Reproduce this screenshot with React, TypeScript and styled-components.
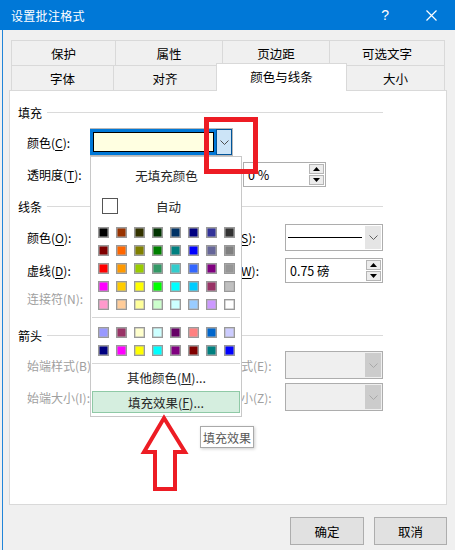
import React from 'react';
import styled, { createGlobalStyle } from 'styled-components';

const FONT = '"Noto Sans CJK SC", "Noto Sans", sans-serif';

const GlobalStyle = createGlobalStyle`
  html, body {
    margin: 0;
    padding: 0;
    background: #f0f0f0;
    font-family: ${FONT};
    font-size: 12px;
  }
  * {
    box-sizing: border-box;
  }
`;

const PALETTE = [
  ['#000000', '#993300', '#333300', '#003300', '#003366', '#000080', '#333399', '#333333'],
  ['#800000', '#ff6600', '#808000', '#008000', '#008080', '#0000ff', '#666699', '#808080'],
  ['#ff0000', '#ff9900', '#99cc00', '#339966', '#33cccc', '#3366ff', '#800080', '#969696'],
  ['#ff00ff', '#ffcc00', '#ffff00', '#00ff00', '#00ffff', '#00ccff', '#993366', '#c0c0c0'],
  ['#ff99cc', '#ffcc99', '#ffff99', '#ccffcc', '#ccffff', '#99ccff', '#cc99ff', '#ffffff'],
];

const RECENT = [
  ['#9999ff', '#993366', '#ffffcc', '#ccffff', '#660066', '#ff8080', '#0066cc', '#ccccff'],
  ['#000080', '#ff00ff', '#ffff00', '#00ffff', '#800080', '#800000', '#008080', '#0000ff'],
];

const Chevron = ({ color = '#606060' }: { color?: string }) => (
  <svg width='9' height='5' viewBox='0 0 9 5'>
    <polyline points='0.5,0.5 4.5,4.5 8.5,0.5' fill='none' stroke={color} strokeWidth='1' />
  </svg>
);

const Triangle = ({ down }: { down?: boolean }) => (
  <svg width='7' height='4' viewBox='0 0 7 4'>
    <polygon points={down ? '0,0 7,0 3.5,4' : '3.5,0 7,4 0,4'} fill='#000' />
  </svg>
);

const Spin = ({ value, width }: { value: string; width: number }) => (
  <SpinBox $w={width}>
    <SpinText>{value}</SpinText>
    <SpinButtons>
      <SpinBtn>
        <Triangle />
      </SpinBtn>
      <SpinBtn>
        <Triangle down />
      </SpinBtn>
    </SpinButtons>
  </SpinBox>
);

const App = () => {
  return (
    <>
      <GlobalStyle />
      <Window>
        <TitleBar>
          <Title>设置批注格式</Title>
          <TitleIcons>
            <Help>?</Help>
            <svg width='11' height='11' viewBox='0 0 11 11'>
              <path d='M0.5,0.5 L10.5,10.5 M10.5,0.5 L0.5,10.5' stroke='#fff' strokeWidth='1.2' />
            </svg>
          </TitleIcons>
        </TitleBar>

        <Frame>
          <Tabs>
            <TabRow>
              <Tab $w={104}>保护</Tab>
              <Tab $w={107}>属性</Tab>
              <Tab $w={107}>页边距</Tab>
              <Tab $w={116} $last>可选文字</Tab>
            </TabRow>
            <TabRow>
              <Tab $w={102}>字体</Tab>
              <Tab $w={103}>对齐</Tab>
              <ActiveTab $w={131}>颜色与线条</ActiveTab>
              <Tab $w={98} $last>大小</Tab>
            </TabRow>
          </Tabs>

          <Panel>
            <Section $mt={0}>
              <span>填充</span>
              <Rule />
            </Section>
            <Row $mt={7}>
              <Label>
                颜色(<u>C</u>):
              </Label>
              <ColorCombo>
                <FocusRing>
                  <ColorFill />
                </FocusRing>
                <ActiveDrop>
                  <Chevron color='#4d4d4d' />
                </ActiveDrop>
              </ColorCombo>
            </Row>
            <Row $mt={4}>
              <Label>
                透明度(<u>T</u>):
              </Label>
              <Slot $w={153} />
              <Spin value='0 %' width={83} />
            </Row>

            <Section $mt={9}>
              <span>线条</span>
              <Rule />
            </Section>
            <Row $mt={8}>
              <Label>
                颜色(<u>O</u>):
              </Label>
              <Slot $w={123} />
              <Label $w={72}>
                样式(<u>S</u>):
              </Label>
              <LineCombo>
                <LineSample>
                  <Stroke />
                </LineSample>
                <GrayDrop>
                  <Chevron />
                </GrayDrop>
              </LineCombo>
            </Row>
            <Row $mt={5}>
              <Label>
                虚线(<u>D</u>):
              </Label>
              <Slot $w={123} />
              <Label $w={72}>
                粗细(<u>W</u>):
              </Label>
              <Spin value='0.75 磅' width={98} />
            </Row>
            <Row $mt={0}>
              <Label $disabled>连接符(N):</Label>
            </Row>

            <Section $mt={14}>
              <span>箭头</span>
              <Rule />
            </Section>
            <Row $mt={7}>
              <Label $disabled>始端样式(B):</Label>
              <Slot $w={115} />
              <Label $w={80} $disabled>
                末端样式(E):
              </Label>
              <DisabledCombo>
                <GrayDrop $disabled>
                  <Chevron color='#a8a8a8' />
                </GrayDrop>
              </DisabledCombo>
            </Row>
            <Row $mt={4}>
              <Label $disabled>始端大小(I):</Label>
              <Slot $w={115} />
              <Label $w={80} $disabled>
                末端大小(Z):
              </Label>
              <DisabledCombo>
                <GrayDrop $disabled>
                  <Chevron color='#a8a8a8' />
                </GrayDrop>
              </DisabledCombo>
            </Row>
          </Panel>

          <Footer>
            <Button $w={74}>确定</Button>
            <Button $w={73}>取消</Button>
          </Footer>
        </Frame>

        <Popup>
          <MenuItem $h={30}>无填充颜色</MenuItem>
          <AutoRow>
            <Check />
            <span>自动</span>
          </AutoRow>
          <Grid $mt={5}>
            {PALETTE.flat().map((c, i) => (
              <Swatch key={i} $c={c} />
            ))}
          </Grid>
          <MenuRule />
          <Grid $mt={9}>
            {RECENT.flat().map((c, i) => (
              <Swatch key={i} $c={c} />
            ))}
          </Grid>
          <MenuRule />
          <MoreItem>
            其他颜色(<u>M</u>)...
          </MoreItem>
          <HotItem>
            填充效果(<u>F</u>)...
          </HotItem>
        </Popup>

        <Tooltip>填充效果</Tooltip>

        <RedBox />
        <Arrow width='56' height='88' viewBox='0 0 56 88'>
          <polygon
            points='26,8 47,42 37,42 37,79 17,79 17,42 6,42'
            fill='none'
            stroke='#ed1c24'
            strokeWidth='4'
            strokeLinejoin='miter'
          />
        </Arrow>
      </Window>
    </>
  );
};

export default App;

// styled
const Window = styled.div`
  position: relative;
  width: 455px;
  height: 550px;
  overflow: hidden;
  background: #f0f0f0;
`;

const TitleBar = styled.div`
  height: 30px;
  background: #0078d7;
  color: #fff;
  display: flex;
  align-items: center;
  justify-content: space-between;
  padding: 0 18px 0 11px;
`;

const Title = styled.div`
  font-size: 12px;
  letter-spacing: 0.3px;
`;

const TitleIcons = styled.div`
  display: flex;
  align-items: center;
  gap: 37px;
`;

const Help = styled.span`
  font-family: 'Liberation Sans', sans-serif;
  font-size: 14px;
`;

const Frame = styled.div`
  margin-left: 2px;
  border-left: 1px solid #2185d9;
  height: 520px;
  padding-top: 10px;
`;

const Tabs = styled.div`
  margin-left: 8px;
  width: 434px;
`;

const TabRow = styled.div`
  display: flex;
  align-items: flex-end;
  height: 25px;
`;

const Tab = styled.div<{ $w: number; $last?: boolean }>`
  width: ${(p) => p.$w}px;
  height: 25px;
  border-top: 1px solid #d9d9d9;
  border-left: 1px solid #d9d9d9;
  border-right: ${(p) => (p.$last ? '1px solid #d9d9d9' : 'none')};
  display: flex;
  align-items: center;
  justify-content: center;
  color: #000;
  font-size: 12.5px;
`;

const ActiveTab = styled(Tab)`
  position: relative;
  z-index: 1;
  height: 28px;
  margin-bottom: -1px;
  background: #fff;
  border-right: 1px solid #d9d9d9;
  padding-bottom: 2px;
  & + div {
    border-left: none;
  }
`;

const Panel = styled.div`
  margin-left: 6px;
  width: 438px;
  height: 415px;
  background: #fff;
  border: 1px solid #d9d9d9;
  padding: 12px 0 0 8px;
  display: flex;
  flex-direction: column;
`;

const Section = styled.div<{ $mt: number }>`
  margin-top: ${(p) => p.$mt}px;
  width: 365px;
  height: 18px;
  display: flex;
  align-items: center;
  color: #000;
  font-size: 12px;
`;

const Rule = styled.div`
  flex: 1;
  height: 1px;
  margin-left: 5px;
  background: #dadada;
`;

const Row = styled.div<{ $mt: number }>`
  margin-top: ${(p) => p.$mt}px;
  height: 28px;
  padding-left: 9px;
  display: flex;
  align-items: center;
`;

const Label = styled.div<{ $w?: number; $disabled?: boolean }>`
  width: ${(p) => p.$w ?? 63}px;
  flex-shrink: 0;
  white-space: nowrap;
  color: ${(p) => (p.$disabled ? '#a0a0a0' : '#000')};
  font-size: 12px;
  u {
    text-underline-offset: 2px;
  }
`;

const Slot = styled.div<{ $w: number }>`
  width: ${(p) => p.$w}px;
  flex-shrink: 0;
`;

const ColorCombo = styled.div`
  width: 143px;
  height: 28px;
  display: flex;
  border: 1px solid #b8b8b8;
  border-left: none;
`;

const FocusRing = styled.div`
  flex: 1;
  border: 3px solid #0078d7;
  border-right-width: 2px;
`;

const ColorFill = styled.div`
  height: 100%;
  border: 1px solid #000;
  background: #ffffe1;
`;

const ActiveDrop = styled.div`
  width: 16px;
  background: #cce4f7;
  border: 1px solid #005499;
  display: flex;
  align-items: center;
  justify-content: center;
`;

const SpinBox = styled.div<{ $w: number }>`
  width: ${(p) => p.$w}px;
  height: 25px;
  border: 1px solid #adadad;
  background: #fff;
  display: flex;
  align-items: center;
  justify-content: space-between;
  padding: 0 1px 0 4px;
`;

const SpinText = styled.span`
  font-size: 12.5px;
  color: #000;
`;

const SpinButtons = styled.div`
  display: flex;
  flex-direction: column;
  gap: 1px;
`;

const SpinBtn = styled.div`
  width: 15px;
  height: 10px;
  background: #ececec;
  border: 1px solid #b5b5b5;
  display: flex;
  align-items: center;
  justify-content: center;
`;

const LineCombo = styled.div`
  width: 98px;
  height: 27px;
  border: 1px solid #adadad;
  display: flex;
`;

const LineSample = styled.div`
  flex: 1;
  display: flex;
  align-items: center;
  padding: 0 2px;
`;

const Stroke = styled.div`
  flex: 1;
  height: 1px;
  background: #000;
`;

const GrayDrop = styled.div<{ $disabled?: boolean }>`
  width: 16px;
  margin: 1px;
  background: ${(p) => (p.$disabled ? '#cccccc' : '#e5e5e5')};
  display: flex;
  align-items: center;
  justify-content: center;
`;

const DisabledCombo = styled.div`
  width: 98px;
  height: 28px;
  border: 1px solid #adadad;
  background: #efefef;
  display: flex;
  justify-content: flex-end;
`;

const Footer = styled.div`
  margin: 12px 0 0 6px;
  width: 438px;
  display: flex;
  justify-content: flex-end;
  gap: 10px;
`;

const Button = styled.button<{ $w: number }>`
  width: ${(p) => p.$w}px;
  height: 28px;
  background: #e1e1e1;
  border: 1px solid #adadad;
  font-family: ${FONT};
  font-size: 12.5px;
  color: #000;
  padding: 0;
`;

const Popup = styled.div`
  position: absolute;
  left: 90px;
  top: 156px;
  width: 152px;
  background: #fff;
  border: 1px solid #c8c8c8;
  padding: 3px 0 3px 1px;
  display: flex;
  flex-direction: column;
  z-index: 2;
`;

const MenuItem = styled.div<{ $h: number }>`
  height: ${(p) => p.$h}px;
  display: flex;
  align-items: center;
  justify-content: center;
  color: #262626;
  font-size: 12.5px;
`;

const AutoRow = styled.div`
  height: 32px;
  display: flex;
  align-items: center;
  padding-left: 10px;
  color: #262626;
  font-size: 12.5px;
  span {
    margin-left: 38px;
  }
`;

const Check = styled.div`
  width: 16px;
  height: 16px;
  border: 1px solid #555;
  background: #fff;
`;

const Grid = styled.div<{ $mt: number }>`
  margin-top: ${(p) => p.$mt}px;
  padding-left: 6px;
  display: grid;
  grid-template-columns: repeat(8, 11px);
  gap: 7px;
`;

const Swatch = styled.div<{ $c: string }>`
  width: 11px;
  height: 11px;
  background: ${(p) => p.$c};
  border: 1px solid #999;
  box-shadow: inset 0 0 0 0.5px #b0b0b0;
`;

const MenuRule = styled.div`
  margin: 7px 1px 0 0;
  height: 1px;
  background: #d7d7d7;
`;

const MoreItem = styled.div`
  height: 27px;
  padding-top: 5px;
  text-align: center;
  color: #262626;
  font-size: 12.5px;
  line-height: 17px;
`;

const HotItem = styled.div`
  height: 22px;
  margin-right: 1px;
  background: #d5eedf;
  border: 1px solid #8fc9a6;
  display: flex;
  align-items: center;
  justify-content: center;
  color: #262626;
  font-size: 12.5px;
`;

const Tooltip = styled.div`
  position: absolute;
  left: 200px;
  top: 426px;
  height: 22px;
  padding: 0 2px;
  background: #fff;
  border: 1px solid #a9a9a9;
  box-shadow: 1px 1px 3px rgba(0, 0, 0, 0.2);
  display: flex;
  align-items: center;
  color: #575757;
  font-size: 12px;
  z-index: 2;
`;

const RedBox = styled.div`
  position: absolute;
  left: 204px;
  top: 117px;
  width: 54px;
  height: 57px;
  border: 5px solid #ed1c24;
  z-index: 3;
`;

const Arrow = styled.svg`
  position: absolute;
  left: 138px;
  top: 410px;
  z-index: 3;
`;
